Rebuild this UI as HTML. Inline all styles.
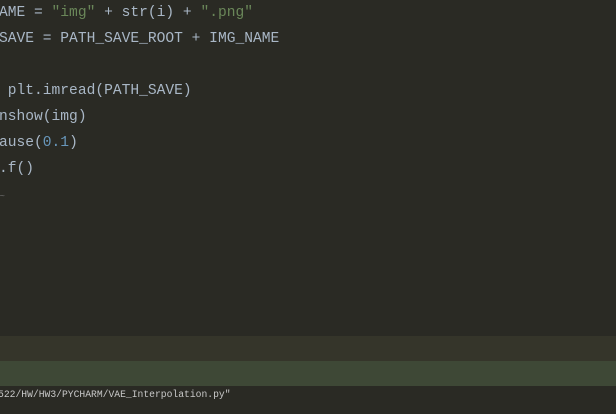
<!DOCTYPE html>
<html><head><style>
body{margin:0;width:616px;height:414px;overflow:hidden;background:#2a2a24;font-family:"Liberation Mono",monospace;}
.l{position:absolute;left:-1px;font-size:14.6px;color:#a9b7c6;white-space:pre;line-height:20px;}
.s{color:#6a8759}.n{color:#6897bb}
.b1{position:absolute;left:0;top:336px;width:616px;height:25px;background:#35352a;}
.b2{position:absolute;left:0;top:361px;width:616px;height:25px;background:#3e4836;}
.st{position:absolute;left:-2px;top:389px;font-size:9.7px;color:#c8c8c8;white-space:pre;}
</style></head><body>
<div class="l" style="top:3px">AME = <span class="s">"img"</span> + str(i) + <span class="s">".png"</span></div>
<div class="l" style="top:29px">SAVE = PATH_SAVE_ROOT + IMG_NAME</div>
<div class="l" style="top:81px"> plt.imread(PATH_SAVE)</div>
<div class="l" style="top:107px">nshow(img)</div>
<div class="l" style="top:133px">ause(<span class="n">0.1</span>)</div>
<div class="l" style="top:159px">.f()</div>
<div class="l" style="top:188px;font-size:10px;color:#666">~</div>
<div class="b1"></div><div class="b2"></div>
<div class="st">522/HW/HW3/PYCHARM/VAE_Interpolation.py"</div>
</body></html>
